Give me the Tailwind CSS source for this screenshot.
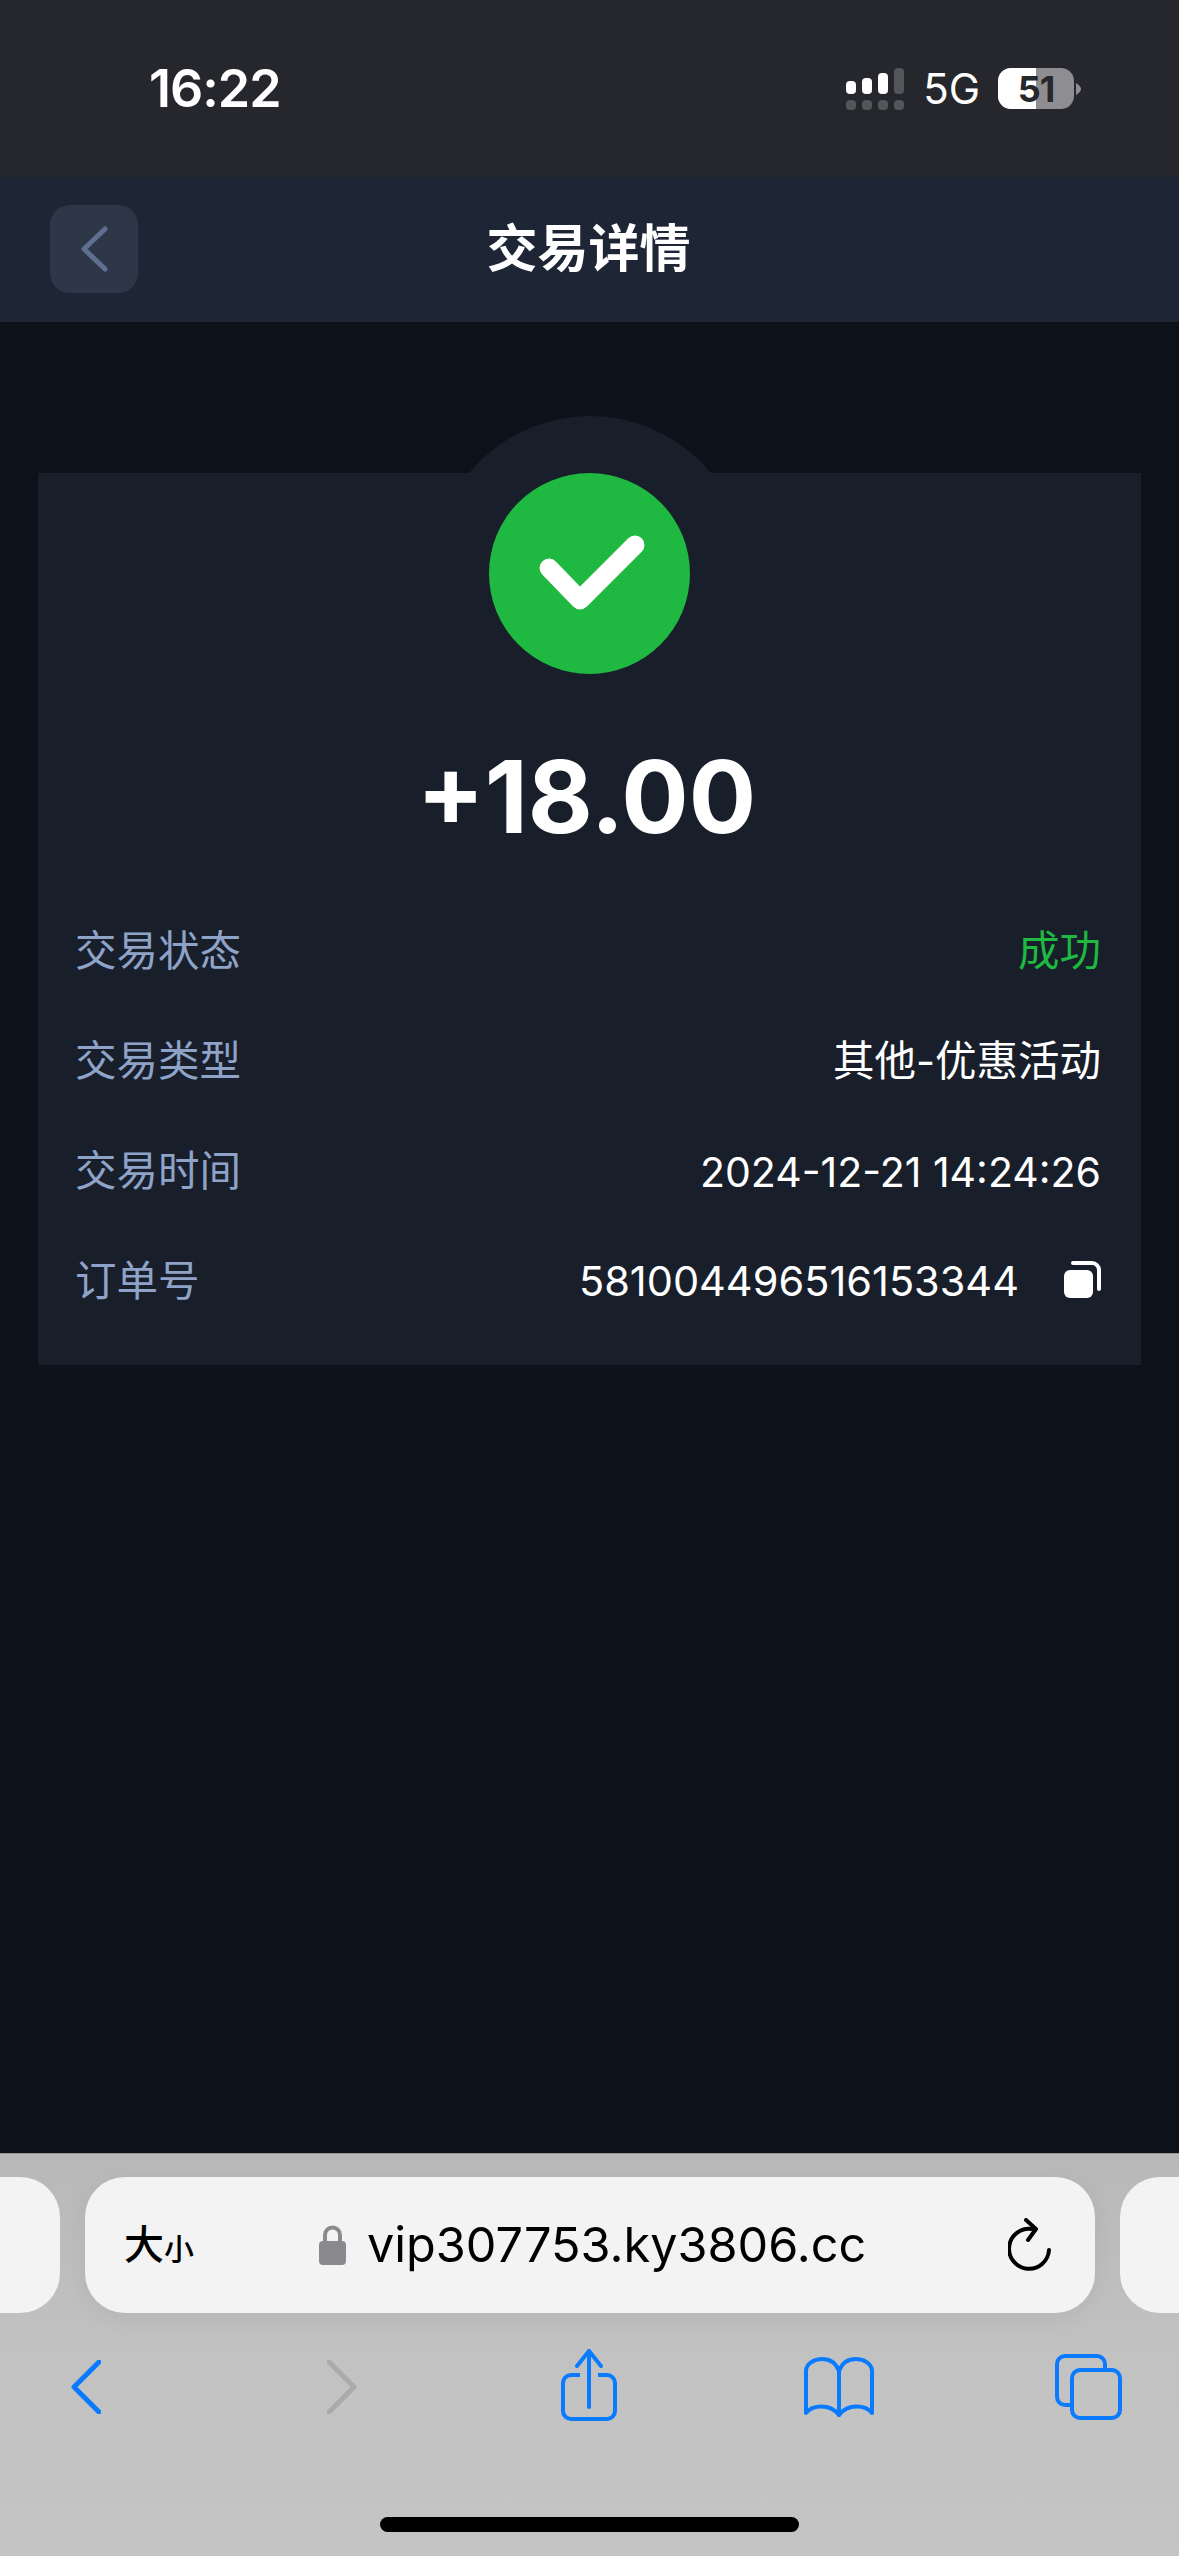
<!DOCTYPE html>
<html lang="zh-CN">
<head>
  <meta charset="UTF-8" />
  <title>交易详情</title>
  <script src="https://cdn.jsdelivr.net/npm/@tailwindcss/browser@4"></script>
</head>
<body class="w-[1179px] h-[2556px] overflow-hidden bg-[#0d1119] font-['Inter','Noto_Sans_CJK_SC',sans-serif] flex flex-col">
  <!-- status bar -->
  <div class="h-[177px] shrink-0 bg-[#26272c] flex items-center justify-between pl-[149px] pr-[98px] text-white">
    <span class="text-[52px] leading-none font-semibold tracking-[-1px]">16:22</span>
    <div class="flex items-center">
      <svg class="w-[58px] h-[42px]" viewBox="0 0 58 42">
        <rect x="0" y="13" width="10" height="13" rx="4" fill="#fff" />
        <rect x="16" y="10" width="10" height="16" rx="4" fill="#fff" />
        <rect x="32" y="5" width="10" height="21" rx="4" fill="#fff" />
        <rect x="48" y="0" width="10" height="26" rx="4" fill="#55565a" />
        <rect x="0" y="32" width="10" height="10" rx="4" fill="#55565a" />
        <rect x="16" y="32" width="10" height="10" rx="4" fill="#55565a" />
        <rect x="32" y="32" width="10" height="10" rx="4" fill="#55565a" />
        <rect x="48" y="32" width="10" height="10" rx="4" fill="#55565a" />
      </svg>
      <span class="ml-[19px] text-[42px] leading-none font-normal">5G</span>
      <div class="ml-[18px] relative w-[76px] h-[41px] rounded-[13px] overflow-hidden bg-[#8e8e92] flex items-center justify-center">
        <div class="absolute left-0 top-0 bottom-0 w-[38px] bg-white"></div>
        <span class="relative text-[36px] leading-none font-bold text-[#26272c] tracking-[-1px]">51</span>
      </div>
      <svg class="ml-[2px] w-[5px] h-[12px]" viewBox="0 0 5 12"><path d="M0 0C3 2 5 4 5 6S3 10 0 12Z" fill="#8e8e92" /></svg>
    </div>
  </div>

  <!-- header -->
  <header class="relative h-[145px] shrink-0 bg-[#1e2535] flex items-center justify-center">
    <button class="absolute left-[50px] top-[28px] w-[88px] h-[88px] rounded-[20px] bg-[#2d3748] flex items-center justify-center">
      <svg class="w-[30px] h-[46px]" viewBox="0 0 30 46" fill="none" stroke="#5f6f8f" stroke-width="5" stroke-linecap="round" stroke-linejoin="round"><path d="M26 3L5 23L26 43" /></svg>
    </button>
    <h1 class="text-[51px] leading-none font-bold text-white pr-[2px] pb-[2px]">交易详情</h1>
  </header>

  <!-- content -->
  <main class="flex-1 pt-[151px] px-[38px]">
    <div class="relative bg-[#181f2b] h-[892px] pb-[28px] flex flex-col">
      <div class="absolute left-1/2 top-[-57px] -translate-x-1/2 w-[314px] h-[314px] rounded-full bg-[#181f2b]"></div>
      <div class="relative mx-auto w-[201px] h-[201px] rounded-full bg-[#1fb841] flex items-center justify-center">
        <svg class="w-[201px] h-[201px]" viewBox="0 0 201 201" fill="none" stroke="#fff" stroke-width="19" stroke-linecap="round" stroke-linejoin="round"><path d="M60 95L91 127L146 72" /></svg>
      </div>
      <div class="relative mt-[73px] mb-[50px] pr-[6px] text-center text-[100px] leading-[100px] font-bold text-white">+18.00</div>
      <div class="relative flex flex-col pl-[37px] pr-[40px] text-[41.500px] leading-none">
        <div class="h-[110px] flex items-center justify-between">
          <span class="text-[#8fa3c8]">交易状态</span>
          <span class="text-[#1fb841]">成功</span>
        </div>
        <div class="h-[110px] flex items-center justify-between">
          <span class="text-[#8fa3c8]">交易类型</span>
          <span class="text-white">其他-优惠活动</span>
        </div>
        <div class="h-[110px] flex items-center justify-between">
          <span class="text-[#8fa3c8]">交易时间</span>
          <span class="text-white text-[41px]">2024-12-21 14:24:26</span>
        </div>
        <div class="h-[110px] flex items-center justify-between">
          <span class="text-[#8fa3c8]">订单号</span>
          <div class="flex items-center text-white">
            <span>581004496516153344</span>
            <svg class="ml-[45px] w-[37px] h-[37px] mb-[6px]" viewBox="0 0 37 37">
              <rect x="0" y="9" width="29" height="28" rx="6" fill="#fff" />
              <path d="M9 2H28A7 7 0 0 1 35 9V28" fill="none" stroke="#fff" stroke-width="4" stroke-linecap="round" />
            </svg>
          </div>
        </div>
      </div>
    </div>
  </main>

  <!-- safari toolbar -->
  <div class="relative h-[403px] shrink-0 bg-gradient-to-b from-[#b8b8b9] via-[#c2c2c3] to-[#c4c4c5] border-t border-[#9a9a9b] overflow-hidden">
    <div class="mt-[23px] flex items-center gap-[25px] ml-[-201px] w-[1600px]">
      <div class="w-[261px] h-[136px] rounded-[40px] bg-[#f3f3f3]"></div>
      <div class="w-[1010px] h-[136px] rounded-[40px] bg-[#f3f3f3] flex items-center pl-[39px] pr-[43px] shadow-[0_6px_24px_rgba(0,0,0,0.06)]">
        <span class="text-[40px] leading-none font-medium text-black">大</span><span class="text-[30px] leading-none font-medium text-black mt-[8px]">小</span>
        <svg class="ml-[125px] w-[27px] h-[40px]" viewBox="0 0 27 40">
          <path d="M6 18V10A7.500 7.500 0 0 1 21 10V18" fill="none" stroke="#8a8a8e" stroke-width="4" />
          <rect x="0" y="16" width="27" height="24" rx="4" fill="#8a8a8e" />
        </svg>
        <span class="ml-[21px] text-[48.600px] leading-none text-black">vip307753.ky3806.cc</span>
        <svg class="ml-auto w-[44px] h-[54px]" viewBox="0 0 44 54" fill="none" stroke="#000" stroke-width="4" stroke-linecap="round" stroke-linejoin="round">
          <path d="M24 11A20 20 0 1 0 41 32" />
          <path d="M18 2L28 11L20 22" />
        </svg>
      </div>
      <div class="w-[260px] h-[136px] rounded-[40px] bg-[#f3f3f3]"></div>
    </div>

    <div class="relative mt-[36px] h-[72px]">
      <svg class="absolute left-[71px] top-[11px] w-[30px] h-[54px]" viewBox="0 0 30 54" fill="none" stroke="#0a7bff" stroke-width="5" stroke-linecap="round" stroke-linejoin="round"><path d="M28 2L3 27L28 52" /></svg>
      <svg class="absolute left-[327px] top-[11px] w-[30px] h-[54px]" viewBox="0 0 30 54" fill="none" stroke="#a9aaaa" stroke-width="5" stroke-linecap="round" stroke-linejoin="round"><path d="M2 2L27 27L2 52" /></svg>
      <svg class="absolute left-[561px] top-0 w-[56px] h-[72px]" viewBox="0 0 56 72" fill="none" stroke="#0a7bff" stroke-width="4" stroke-linecap="round" stroke-linejoin="round">
        <path d="M28 2V58" />
        <path d="M16 17L28 2L40 17" />
        <path d="M19 26H10A8 8 0 0 0 2 34V62A8 8 0 0 0 10 70H46A8 8 0 0 0 54 62V34A8 8 0 0 0 46 26H37" stroke-linecap="butt" />
      </svg>
      <svg class="absolute left-[804px] top-[8px] w-[70px] h-[60px]" viewBox="0 0 70 60" fill="none" stroke="#0a7bff" stroke-width="4" stroke-linecap="round" stroke-linejoin="round">
        <path d="M35 14V58" />
        <path d="M35 14C32 6 26 2 18 2C10 2 2 7 2 14V56C8 48 26 46 35 58C44 46 62 48 68 56V14C68 7 60 2 52 2C44 2 38 6 35 14Z" />
      </svg>
      <svg class="absolute left-[1055px] top-[5px] w-[67px] h-[66px]" viewBox="0 0 67 66" fill="none" stroke="#0a7bff" stroke-width="4">
        <path d="M50 15V10A8 8 0 0 0 42 2H10A8 8 0 0 0 2 10V43A8 8 0 0 0 10 51H16" />
        <rect x="17" y="16" width="48" height="48" rx="8" />
      </svg>
    </div>

    <div class="absolute left-[380px] top-[363px] w-[419px] h-[15px] rounded-full bg-black"></div>
  </div>
</body>
</html>
